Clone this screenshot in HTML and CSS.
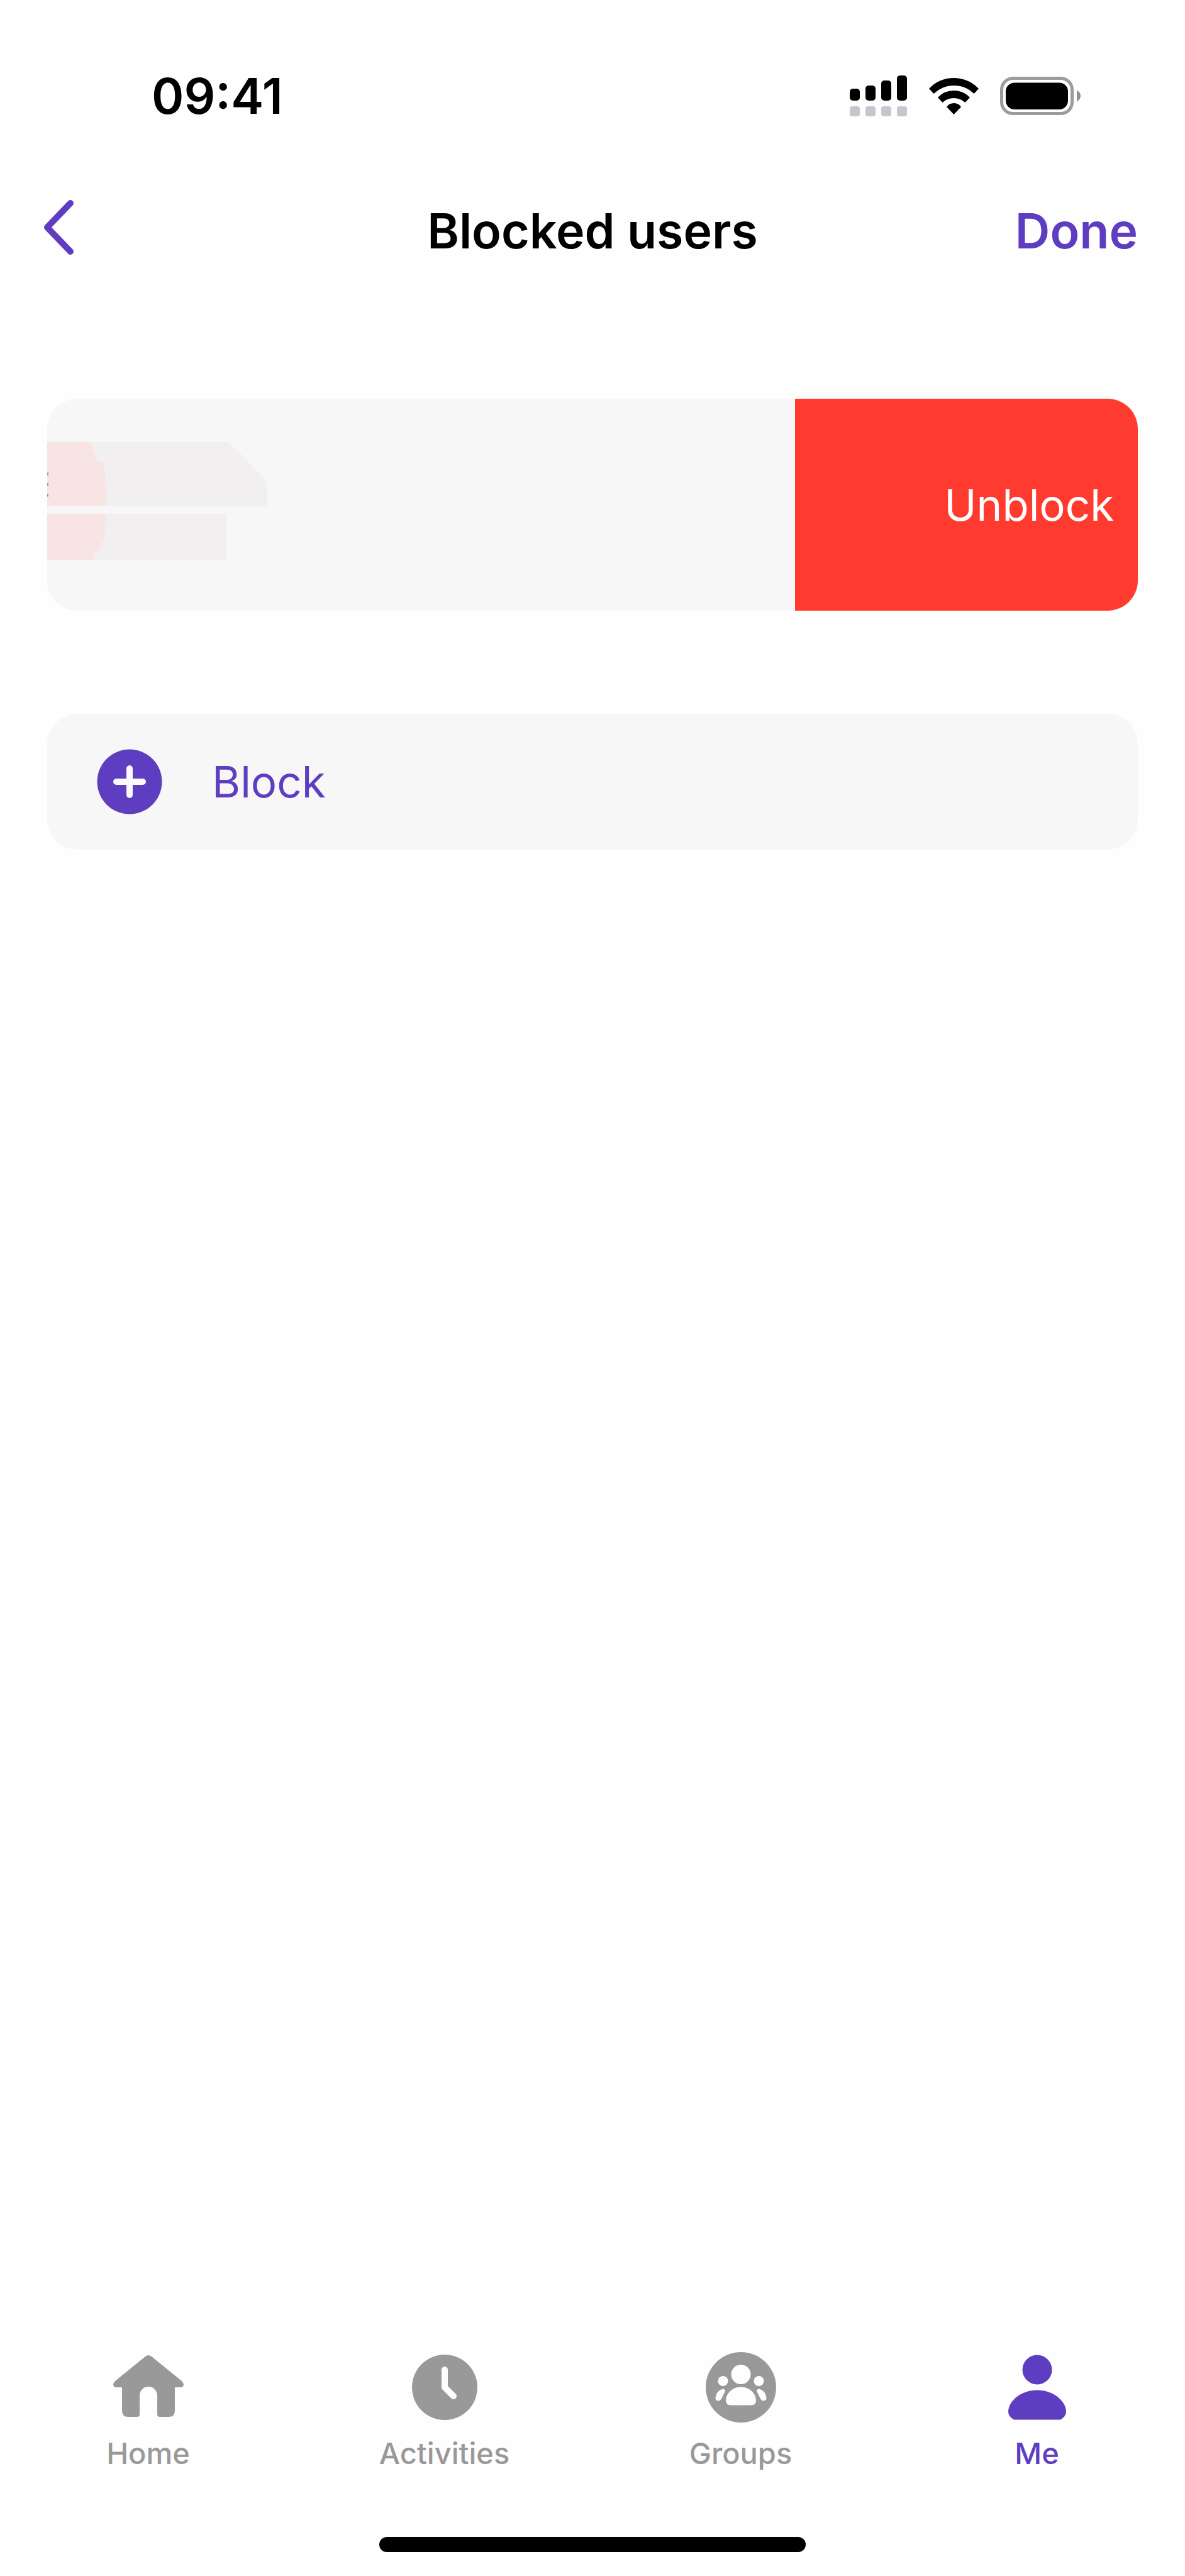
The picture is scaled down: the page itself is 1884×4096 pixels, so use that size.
FILE: index.html
```html
<!DOCTYPE html>
<html lang="en">
<head>
    <meta charset="UTF-8">
    <meta name="viewport" content="width=device-width, initial-scale=1.0">
    <title>Blocked users</title>
    <link rel="stylesheet" href="styles.css">
</head>
<body>

<div class="status-bar">
    <span class="time">09:41</span>
    <div class="status-icons">
        <svg width="92" height="66" viewBox="0 0 92 66" aria-hidden="true">
            <rect x="0" y="21" width="16" height="19" rx="5"/>
            <rect x="25" y="16" width="16" height="24" rx="5"/>
            <rect x="50" y="8" width="16" height="32" rx="5"/>
            <rect x="75" y="0" width="16" height="40" rx="5"/>
            <g fill="#c8c5cf">
                <rect x="0" y="49" width="16" height="16" rx="4"/>
                <rect x="25" y="49" width="16" height="16" rx="4"/>
                <rect x="50" y="49" width="16" height="16" rx="4"/>
                <rect x="75" y="49" width="16" height="16" rx="4"/>
            </g>
        </svg>
        <svg width="79" height="60" viewBox="0 0 79 60" aria-hidden="true">
            <path d="M0 18Q16 1 39.500 1Q63 1 79 18L71.500 26Q58 13 39.500 13Q21 13 7.500 26Z"/>
            <path d="M14 32Q24 21 39.500 21Q55 21 65 32L57.500 40Q50 33 39.500 33Q29 33 21.500 40Z"/>
            <path d="M28 47Q32 41 39.500 41Q47 41 51 47L39.500 59Z"/>
        </svg>
        <svg width="128" height="62" viewBox="0 0 128 62" aria-hidden="true">
            <rect x="2.500" y="2.500" width="112" height="56" rx="18" fill="none" stroke="#9c9c9c" stroke-width="5"/>
            <rect x="9" y="9.500" width="99" height="42.500" rx="14"/>
            <path d="M122 21.500Q128 25 128 30.500Q128 36 122 39.500Z" fill="#8f8f8f"/>
        </svg>
    </div>
</div>

<header class="nav-header">
    <button class="back" aria-label="Back">
        <svg width="48" height="98" viewBox="0 0 48 98" fill="none" stroke="currentColor" stroke-width="10" stroke-linecap="round" stroke-linejoin="round" aria-hidden="true">
            <path d="M43 5L6 43.500L43 82"/>
        </svg>
    </button>
    <h1>Blocked users</h1>
    <button class="done">Done</button>
</header>

<main>
    <div class="card user-row">
        <div class="user">
            <svg width="352" height="188" viewBox="0 0 352 188" aria-hidden="true">
                <path fill="#f2eff0" d="M0 0H288L303 14L350 64V102H0ZM0 114H284V187H0Z"/>
                <path fill="#f8e5e3" d="M0 0H69L74 16L80 31L87 30L90 38L92 48V66H94V102H0ZM0 114H94V125L92 129V143L90 156L85 165L82 174L75 175V187H0Z"/>
                <g fill="#a09a9b">
                    <rect x="0" y="48" width="2" height="5" rx="1"/>
                    <rect x="0" y="65" width="2" height="5" rx="1"/>
                    <rect x="0" y="82" width="2" height="5" rx="1"/>
                </g>
            </svg>
        </div>
        <button class="unblock">Unblock</button>
    </div>

    <button class="card block-row">
        <svg width="104" height="104" viewBox="0 0 104 104" aria-hidden="true">
            <circle cx="52" cy="52" r="51.500" fill="#5f3dc0"/>
            <path d="M52 31V73M31 52H73" stroke="#fafafa" stroke-width="10" stroke-linecap="round"/>
        </svg>
        <span>Block</span>
    </button>
</main>

<nav class="tab-bar">
    <a href="#home">
        <svg width="112" height="112" viewBox="0 0 112 112" fill="currentColor" aria-hidden="true">
            <path d="M51 7Q56 3 61 7L109 46Q112 49 112 52Q111 56 107 56H98V93Q98 103 88 103H74Q70 103 70 99V70C70 61 64 55 56 55C48 55 42 61 42 70V99Q42 103 38 103H24Q14 103 14 93V56H5Q1 56 0 52Q0 49 3 46Z"/>
        </svg>
        Home
    </a>
    <a href="#activities">
        <svg width="112" height="112" viewBox="0 0 112 112" fill="currentColor" aria-hidden="true">
            <circle cx="56" cy="56" r="52"/>
            <path d="M56 28V56L70 70" fill="none" stroke="#fefefe" stroke-width="10" stroke-linecap="round" stroke-linejoin="round"/>
        </svg>
        Activities
    </a>
    <a href="#groups">
        <svg width="112" height="112" viewBox="0 0 112 112" fill="currentColor" aria-hidden="true">
            <circle cx="56" cy="56" r="56"/>
            <g fill="#fefefe">
                <circle cx="56" cy="35.500" r="15.500"/>
                <circle cx="27.500" cy="46" r="8"/>
                <circle cx="84.500" cy="46" r="8"/>
                <path d="M56 55.500C70 55.500 80 66 80 77Q80 84.500 72 84.500H40Q32 84.500 32 77C32 66 42 55.500 56 55.500Z"/>
                <path d="M27 58.500Q32 59 30.500 63L25 74Q23 77.500 20 77.500Q15.500 77 15.500 73Q16.500 62 27 58.500Z"/>
                <path d="M85 58.500Q80 59 81.500 63L87 74Q89 77.500 92 77.500Q96.500 77 96.500 73Q95.500 62 85 58.500Z"/>
            </g>
        </svg>
        Groups
    </a>
    <a href="#me" class="active">
        <svg width="112" height="112" viewBox="0 0 112 112" fill="currentColor" aria-hidden="true">
            <circle cx="56" cy="28" r="23.500"/>
            <path d="M56 60.500C82 60.500 102 78 102 95Q102 102 93 107.500H19Q10 102 10 95C10 78 30 60.500 56 60.500Z"/>
        </svg>
        Me
    </a>
</nav>

<div class="home-indicator"></div>

</body>
</html>
```

FILE: styles.css
```css
* {
    box-sizing: border-box;
}
body {
    margin: 0;
    min-height: 100vh;
    display: flex;
    flex-direction: column;
    background-color: #fefefe;
    color: #000;
    font-family: Inter, "Liberation Sans", sans-serif;
}
button {
    padding: 0;
    border: none;
    background: none;
    color: #5f3dc0;
    font-family: inherit;
    cursor: pointer;
}
svg {
    display: block;
    flex: none;
}
.status-bar {
    display: flex;
    justify-content: space-between;
    align-items: center;
    padding: 107px 166px 0 241px;
}
.time {
    font-size: 78px;
    line-height: 92px;
    font-weight: 600;
}
.status-icons {
    display: flex;
    align-items: center;
    gap: 34px;
}
.nav-header {
    display: grid;
    grid-template-columns: 1fr auto 1fr;
    align-items: center;
    padding: 0 75px;
    margin-top: 119px;
}
.nav-header h1 {
    margin: 0;
    font-size: 77px;
    line-height: 98px;
    font-weight: 600;
}
.back {
    justify-self: start;
    margin-left: -6px;
}
.done {
    justify-self: end;
    font-size: 77px;
    line-height: 98px;
    font-weight: 600;
}
main {
    display: flex;
    flex-direction: column;
    gap: 164px;
    padding: 0 75px;
    margin-top: 218px;
}
.card {
    background-color: #f7f7f7;
    border-radius: 48px;
    overflow: hidden;
}
.user-row {
    display: grid;
    grid-template-columns: 24fr 11fr;
}
.user {
    padding: 69px 0 80px;
}
.unblock {
    padding-right: 38px;
    background-color: #ff3b30;
    color: #fff;
    font-size: 69px;
    text-align: right;
}
.block-row {
    display: flex;
    align-items: center;
    gap: 79px;
    padding: 56px 79px;
    font-size: 69px;
}
.tab-bar {
    display: grid;
    grid-template-columns: repeat(4, 1fr);
    margin-top: auto;
}
.tab-bar a {
    display: flex;
    flex-direction: column;
    align-items: center;
    gap: 22px;
    color: #999;
    font-size: 47px;
    line-height: 54px;
    font-weight: 500;
    text-decoration: none;
}
.tab-bar .active {
    color: #5f3dc0;
}
.home-indicator {
    width: 36%;
    height: 24px;
    margin: 106px auto 38px;
    border-radius: 12px;
    background-color: #000;
}
```
